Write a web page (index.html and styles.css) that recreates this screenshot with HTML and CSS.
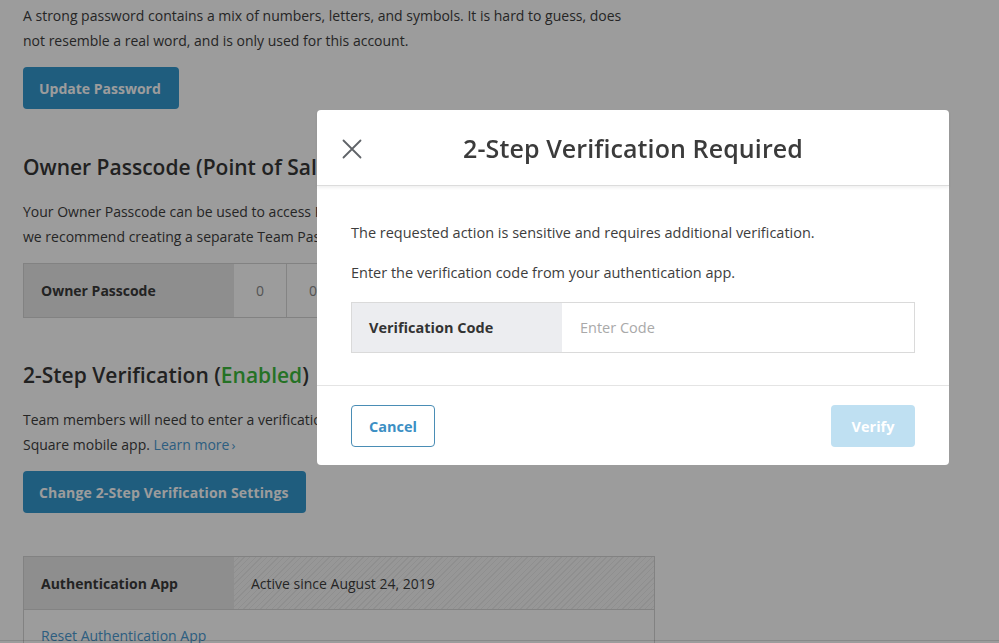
FILE: index.html
```html
<!DOCTYPE html>
<html>
<head>
<meta charset="utf-8">
<link rel="stylesheet" href="styles.css">
</head>
<body>
<main class="page">
  <p class="para">A strong password contains a mix of numbers, letters, and symbols. It is hard to guess, does<br>not resemble a real word, and is only used for this account.</p>
  <button class="btn-primary btn-update">Update Password</button>

  <h2 class="heading h-owner">Owner Passcode (Point of Sale)</h2>
  <p class="para">Your Owner Passcode can be used to access Point of Sale on any device. For security,<br>we recommend creating a separate Team Passcode for each team member.</p>
  <div class="passcode-row">
    <div class="cell-label">Owner Passcode</div>
    <div class="digit">0</div>
    <div class="digit">0</div>
    <div class="digit">0</div>
    <div class="digit">0</div>
  </div>

  <h2 class="heading h-2step">2-Step Verification (<span class="enabled">Enabled</span>)</h2>
  <p class="para">Team members will need to enter a verification code to sign in on the<br>Square mobile app. <a class="link">Learn more<span class="chev">›</span></a></p>
  <button class="btn-primary btn-change">Change 2-Step Verification Settings</button>

  <div class="auth-table">
    <div class="auth-row">
      <div class="cell-label">Authentication App</div>
      <div class="cell-hatch">Active since August 24, 2019</div>
    </div>
    <div class="auth-row2"><a class="link">Reset Authentication App</a></div>
  </div>
</main>

<div class="overlay">
  <div class="modal">
    <div class="modal-head">
      <button class="close" aria-label="Close">
        <svg width="20" height="20" viewBox="0 0 20 20"><path d="M1.5 1.5L18.5 18.5M18.5 1.5L1.5 18.5" stroke="#5f6368" stroke-width="1.8" fill="none" stroke-linecap="round"/></svg>
      </button>
      <h1 class="modal-title">2-Step Verification Required</h1>
    </div>
    <div class="modal-body">
      <p class="mtext">The requested action is sensitive and requires additional verification.</p>
      <p class="mtext">Enter the verification code from your authentication app.</p>
      <div class="field">
        <div class="field-label">Verification Code</div>
        <div class="field-input">Enter Code</div>
      </div>
    </div>
    <div class="modal-foot">
      <button class="btn-cancel">Cancel</button>
      <button class="btn-verify">Verify</button>
    </div>
  </div>
</div>
<div class="bottom-line"></div>
</body>
</html>
```

FILE: styles.css
```css
html, body {
  margin: 0;
  padding: 0;
  background: #ffffff;
  height: 643px;
  overflow: hidden;
}
body {
  font-family: "Open Sans", Lato, Arial, sans-serif;
  color: #3a3a3a;
}
.page {
  width: 632px;
  padding: 3px 0 0 23px;
}
.para {
  margin: 0;
  font-size: 14px;
  line-height: 25px;
  color: #3d3d3d;
  white-space: nowrap;
}
.btn-primary {
  display: block;
  border: none;
  border-radius: 4px;
  background: #3398cf;
  color: #ffffff;
  font-family: inherit;
  font-weight: 700;
  font-size: 14px;
  height: 42px;
  padding: 0 16px;
  text-align: left;
}
.btn-update { margin-top: 14px; width: 156px; }
.btn-change { margin-top: 13px; width: 283px; letter-spacing: 0.15px; }
.heading {
  margin: 0;
  font-size: 21px;
  font-weight: 600;
  color: #363636;
  line-height: 30px;
}
.h-owner { margin-top: 43px; margin-bottom: 17px; }
.h-2step { margin-top: 42px; margin-bottom: 17px; }
.enabled { color: #3dbb3d; }
.link { color: #4a9ad2; }
.chev { font-size: 13px; margin-left: 2px; }
.passcode-row {
  margin-top: 14px;
  display: flex;
  height: 53px;
  border: 1px solid #d4d4d4;
  width: 620px;
}
.cell-label {
  width: 193px;
  padding-left: 17px;
  background: #e8e8e8;
  display: flex;
  align-items: center;
  font-weight: 700;
  font-size: 14px;
  color: #3a3a3a;
}
.digit {
  width: 52px;
  border-right: 1px solid #d8d8d8;
  display: flex;
  align-items: center;
  justify-content: center;
  font-size: 14px;
  color: #8a8a8a;
}
.auth-table {
  margin-top: 43px;
  width: 630px;
  border: 1px solid #d4d4d4;
}
.auth-row {
  display: flex;
  height: 52px;
  border-bottom: 1px solid #d6d6d6;
}
.cell-hatch {
  flex: 1;
  display: flex;
  align-items: center;
  padding-left: 17px;
  font-size: 14px;
  color: #3d3d3d;
  background: repeating-linear-gradient(135deg, #f7f7f7 0 3px, #eaeaea 3px 4px);
}
.auth-row2 {
  height: 60px;
  padding: 16px 0 0 17px;
  font-size: 14px;
  box-sizing: border-box;
}
.overlay {
  position: fixed;
  inset: 0;
  background: rgba(0, 0, 0, 0.39);
  padding: 110px 0 0 317px;
}
.modal {
  width: 632px;
  height: 355px;
  background: #ffffff;
  border-radius: 4px;
  display: flex;
  flex-direction: column;
}
.modal-head {
  height: 75px;
  display: flex;
  align-items: center;
  position: relative;
  border-bottom: 1px solid #dcdcdc;
  box-shadow: 0 2px 3px rgba(0, 0, 0, 0.06);
}
.close {
  position: absolute;
  left: 25px;
  top: 29px;
  border: none;
  background: none;
  padding: 0;
  width: 20px;
  height: 20px;
}
.modal-title {
  margin: 0;
  width: 100%;
  text-align: center;
  font-size: 25px;
  font-weight: 600;
  color: #3b3b3b;
  letter-spacing: 0.1px;
}
.modal-body {
  padding: 34px 34px 0 34px;
  height: 200px;
  box-sizing: border-box;
  border-bottom: 1px solid #e4e4e4;
}
.mtext {
  margin: 0 0 15px 0;
  font-size: 14.5px;
  line-height: 25px;
  color: #3d3d3d;
}
.field {
  margin-top: 17px;
  display: flex;
  height: 51px;
  border: 1px solid #dadada;
  box-sizing: border-box;
}
.field-label {
  width: 210px;
  background: #ecedf0;
  display: flex;
  align-items: center;
  padding-left: 17px;
  box-sizing: border-box;
  font-weight: 700;
  font-size: 14.5px;
  color: #333;
}
.field-input {
  flex: 1;
  display: flex;
  align-items: center;
  padding-left: 18px;
  font-size: 14.5px;
  color: #a9a9a9;
}
.modal-foot {
  display: flex;
  justify-content: space-between;
  padding: 19px 34px 0 34px;
}
.btn-cancel, .btn-verify {
  height: 42px;
  width: 84px;
  border-radius: 4px;
  font-family: inherit;
  font-weight: 700;
  font-size: 14.5px;
  padding: 0;
}
.btn-cancel {
  border: 1px solid #4a8db5;
  background: #ffffff;
  color: #3c8fc4;
}
.btn-verify {
  border: none;
  background: #bfe0f2;
  color: #ffffff;
}
.bottom-line {
  position: fixed;
  left: 0;
  right: 0;
  top: 640px;
  height: 1px;
  background: rgba(0, 0, 0, 0.12);
}
```
